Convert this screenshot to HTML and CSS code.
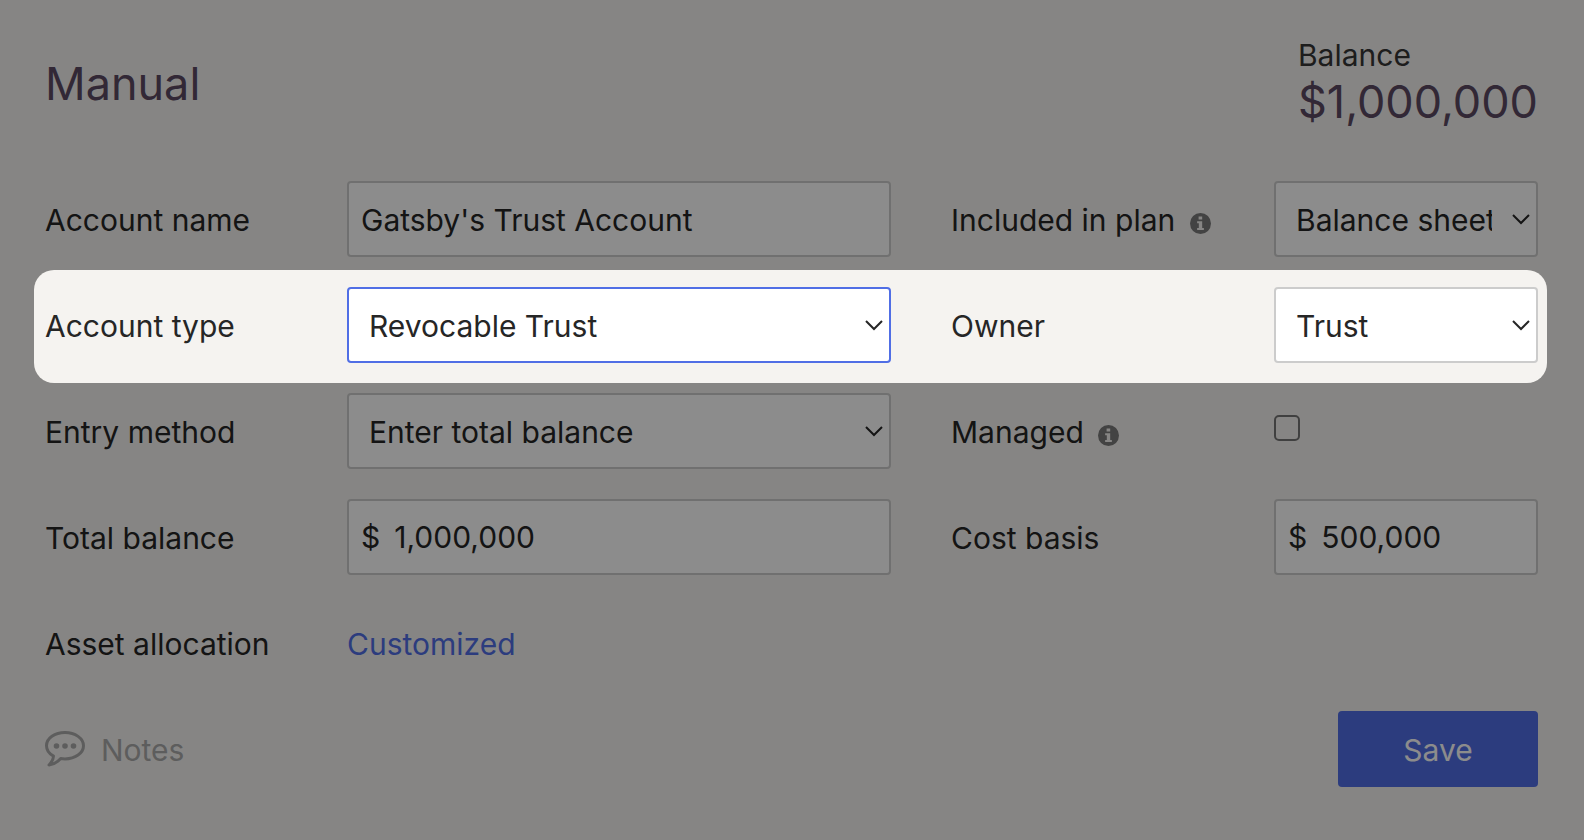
FILE: index.html
```
<!DOCTYPE html>
<html lang="en">
<head>
    <meta charset="UTF-8">
    <meta name="viewport" content="width=device-width, initial-scale=1.0">
    <title>Manual account</title>
    <link rel="stylesheet" href="styles.css">
</head>
<body>
    <form class="account">
        <header class="account-header">
            <h1>Manual</h1>
            <div class="balance">
                <div class="balance-label">Balance</div>
                <div class="balance-amount">$1,000,000</div>
            </div>
        </header>

        <div class="row">
            <label class="name" for="accountName">Account name</label>
            <input type="text" id="accountName" class="box wide" value="Gatsby's Trust Account">
            <label class="name" for="included">Included in plan
                <svg class="info" viewBox="0 0 20 20" aria-hidden="true"><circle cx="10" cy="10" r="10"/><path d="M8.2 3.4h3.4v2.8H8.2zM6.8 7.8h4.800v6.400h1.600v2H6.800v-2h1.600V9.800H6.800z"/></svg>
            </label>
            <select id="included" class="box">
                <option>Balance sheet only</option>
            </select>
        </div>

        <div class="row spotlight">
            <label class="name" for="accountType">Account type</label>
            <select id="accountType" class="box wide active">
                <option>Revocable Trust</option>
            </select>
            <label class="name" for="owner">Owner</label>
            <select id="owner" class="box">
                <option>Trust</option>
            </select>
        </div>

        <div class="row">
            <label class="name" for="entryMethod">Entry method</label>
            <select id="entryMethod" class="box wide">
                <option>Enter total balance</option>
            </select>
            <label class="name" for="managed">Managed
                <svg class="info" viewBox="0 0 20 20" aria-hidden="true"><circle cx="10" cy="10" r="10"/><path d="M8.2 3.4h3.4v2.8H8.2zM6.8 7.8h4.800v6.400h1.600v2H6.800v-2h1.600V9.800H6.800z"/></svg>
            </label>
            <input type="checkbox" id="managed" class="check">
        </div>

        <div class="row">
            <label class="name" for="totalBalance">Total balance</label>
            <div class="box money wide">
                <span>$</span>
                <input type="text" id="totalBalance" value="1,000,000">
            </div>
            <label class="name" for="costBasis">Cost basis</label>
            <div class="box money">
                <span>$</span>
                <input type="text" id="costBasis" value="500,000">
            </div>
        </div>

        <div class="row">
            <span class="name">Asset allocation</span>
            <a href="#" class="name link">Customized</a>
        </div>

        <footer class="account-footer">
            <button type="button" class="notes">
                <svg viewBox="0 0 40 36" aria-hidden="true">
                    <path d="M20 1.5C9.800 1.500 1.500 7.300 1.500 14.700c0 4.300 2.700 8 7 10.400 0 3.500-1.700 6-4.500 8.900 5-.7 8.700-3 11.700-6.400 1.400.2 2.800.3 4.300.3 10.200 0 18.500-5.900 18.500-13.200S30.200 1.500 20 1.500z"/>
                    <circle cx="11.500" cy="15" r="2.800"/>
                    <circle cx="20" cy="15" r="2.800"/>
                    <circle cx="28.500" cy="15" r="2.800"/>
                </svg>
                <span class="name">Notes</span>
            </button>
            <button type="submit" class="save">Save</button>
        </footer>
    </form>
</body>
</html>
```
FILE: styles.css
```
* {
    box-sizing: border-box;
}
body {
    margin: 0;
    min-height: 100vh;
    overflow-x: hidden;
    background-color: #f5f3f0;
    color: #262626;
    font-family: Inter, "Liberation Sans", sans-serif;
    font-size: 30px;
    line-height: 36px;
}
input, select, button {
    font: inherit;
    color: inherit;
}
.account {
    display: flex;
    flex-direction: column;
    gap: 30px;
    padding: 37px 46px 53px 45px;
}
.account-header {
    display: flex;
    justify-content: space-between;
    align-items: flex-start;
    height: 114px;
    color: #5c4a63;
}
h1 {
    margin: 19px 0 0;
    font-size: 45px;
    font-weight: 400;
    line-height: 56px;
}
.balance-label {
    color: #363636;
}
.balance-amount {
    font-size: 45px;
    line-height: 58px;
}

/* form rows */
.row {
    position: relative;
    display: grid;
    grid-template-columns: 302fr 604fr 323fr 264fr;
    align-items: center;
    min-height: 76px;
}
.name {
    padding-top: 2px;
}
.box {
    width: 100%;
    min-width: 0;
    height: 76px;
    padding: 0 12px;
    border: 2px solid #ccc;
    border-radius: 4px;
    background-color: #fff;
    outline: none;
}
.wide {
    width: calc(100% - 60px);
}
input.box {
    padding-top: 2px;
}
select.box {
    appearance: none;
    padding: 2px 44px 0 20px;
    background-image: url("data:image/svg+xml,%3Csvg xmlns='http://www.w3.org/2000/svg' width='18' height='11' fill='none' stroke='%23262626' stroke-width='2'%3E%3Cpath d='M1 1l8 8 8-8'/%3E%3C/svg%3E");
    background-repeat: no-repeat;
    background-position: right 6px center;
}
.box.active {
    border-color: #506ee5;
}
.money {
    display: flex;
    align-items: center;
    gap: 14px;
}
.money input {
    flex: 1;
    min-width: 0;
    padding: 0;
    border: none;
    background: none;
    outline: none;
}
.info {
    width: 21px;
    height: 21px;
    margin-left: 6px;
    vertical-align: -3px;
    fill: #7a7a7a;
}
.info path {
    fill: #f5f3f0;
}
.check {
    appearance: none;
    width: 26px;
    height: 26px;
    margin: 0 0 6px;
    border: 2px solid #767676;
    border-radius: 5px;
}
.link {
    color: #506ee5;
    text-decoration: none;
}

/* dims everything around the highlighted row */
.spotlight::after {
    content: "";
    position: absolute;
    z-index: 1;
    inset: -17px -9px -20px -11px;
    border-radius: 20px;
    box-shadow: 0 0 0 3000px rgba(0, 0, 0, 0.45);
    pointer-events: none;
}

.account-footer {
    display: flex;
    justify-content: space-between;
    align-items: center;
}
.notes {
    display: flex;
    align-items: center;
    gap: 16px;
    padding: 0;
    border: none;
    background: none;
    color: #aaa;
}
.notes svg {
    width: 40px;
    height: 36px;
    fill: currentColor;
}
.notes path {
    fill: none;
    stroke: currentColor;
    stroke-width: 3;
    stroke-linejoin: round;
}
.save {
    width: 200px;
    height: 76px;
    padding: 2px 0 0;
    border: none;
    border-radius: 4px;
    background-color: #506ee5;
    color: #fff;
}
```
